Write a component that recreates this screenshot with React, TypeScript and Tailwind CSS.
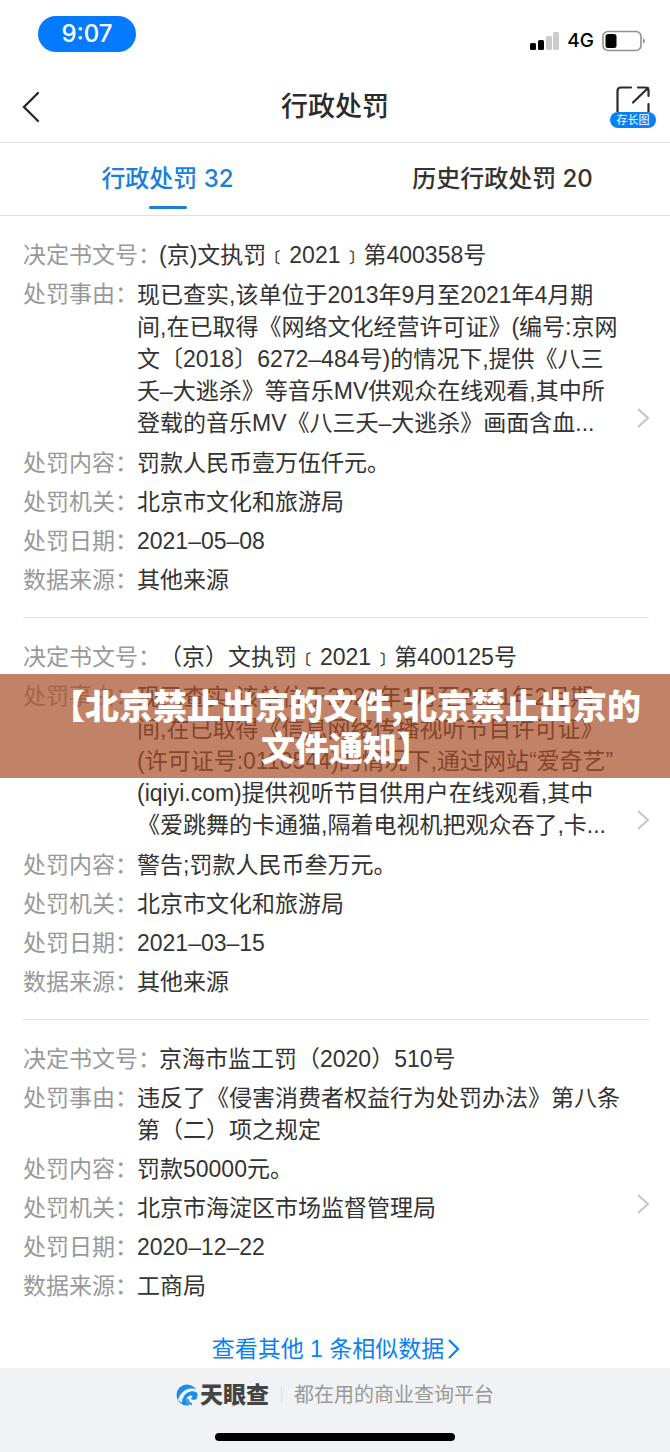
type Field = { label: string; value: string };

type PenaltyRecord = {
  no: string;
  reason: string;
  // 処罰事由が長く省略表示になる場合
  clamped: boolean;
  fields: Field[];
};

// モックデータ
const records: PenaltyRecord[] = [
  {
    no: '(京)文执罚﹝2021﹞第400358号',
    reason:
      '现已查实,该单位于2013年9月至2021年4月期\n间,在已取得《网络文化经营许可证》(编号:京网\n文〔2018〕6272–484号)的情况下,提供《八三\n夭–大逃杀》等音乐MV供观众在线观看,其中所\n登载的音乐MV《八三夭–大逃杀》画面含血...',
    clamped: true,
    fields: [
      { label: '处罚内容', value: '罚款人民币壹万伍仟元。' },
      { label: '处罚机关', value: '北京市文化和旅游局' },
      { label: '处罚日期', value: '2021–05–08' },
      { label: '数据来源', value: '其他来源' },
    ],
  },
  {
    no: '（京）文执罚﹝2021﹞第400125号',
    reason:
      '现已查实,该单位于2020年1月至2021年2月期\n间,在已取得《信息网络传播视听节目许可证》\n(许可证号:0110544)的情况下,通过网站“爱奇艺”\n(iqiyi.com)提供视听节目供用户在线观看,其中\n《爱跳舞的卡通猫,隔着电视机把观众吞了,卡...',
    clamped: true,
    fields: [
      { label: '处罚内容', value: '警告;罚款人民币叁万元。' },
      { label: '处罚机关', value: '北京市文化和旅游局' },
      { label: '处罚日期', value: '2021–03–15' },
      { label: '数据来源', value: '其他来源' },
    ],
  },
  {
    no: '京海市监工罚（2020）510号',
    reason: '违反了《侵害消费者权益行为处罚办法》第八条\n第（二）项之规定',
    clamped: false,
    fields: [
      { label: '处罚内容', value: '罚款50000元。' },
      { label: '处罚机关', value: '北京市海淀区市场监督管理局' },
      { label: '处罚日期', value: '2020–12–22' },
      { label: '数据来源', value: '工商局' },
    ],
  },
];

function StatusBar() {
  return (
    <div className="flex h-[72px] items-start justify-between pr-6 pl-[38px] pt-4">
      <span className="flex h-9 w-[98px] items-center justify-center rounded-full bg-[#047aff] font-['Inter',sans-serif] text-[24px] font-medium text-white">
        9:07
      </span>
      <div className="flex h-[50px] items-center gap-2">
        <svg className="h-5 w-[30px]" viewBox="0 0 30 20">
          <rect x="1" y="12" width="6" height="7" rx="1.5" fill="#000" />
          <rect x="9" y="9" width="6" height="10" rx="1.5" fill="#000" />
          <rect x="17" y="5" width="6" height="14" rx="1.5" fill="#ccc" />
          <rect x="24" y="1" width="6" height="18" rx="1.5" fill="#ccc" />
        </svg>
        <span className="font-['Inter',sans-serif] text-[19px] font-medium text-black">4G</span>
        <svg className="h-[22px] w-[44px]" viewBox="0 0 44 22">
          <rect x="1" y="1.5" width="38" height="19" rx="5" fill="none" stroke="#8f8f8f" strokeWidth="1.6" />
          <rect x="3.5" y="4" width="11" height="14" rx="2.5" fill="#000" />
          <path d="M41 8.500q2 .6 2 2.500t-2 2.500z" fill="#8f8f8f" />
        </svg>
      </div>
    </div>
  );
}

function Header() {
  return (
    <header className="grid h-[71px] grid-cols-[1fr_auto_1fr] items-center border-b border-[#e2e2e2] px-[14px]">
      <button type="button" aria-label="返回" className="justify-self-start pl-2">
        <svg className="h-8 w-[18px]" viewBox="0 0 18 32" fill="none" stroke="#2b2b2b" strokeWidth="2.4" strokeLinecap="round">
          <path d="M16 2 2 16l14 14" />
        </svg>
      </button>
      <h1 className="text-[27px] font-medium text-[#2b2b2b]">行政处罚</h1>
      <button type="button" className="flex w-[46px] flex-col items-center justify-self-end">
        <svg className="h-[26px] w-[34px]" viewBox="0 0 34 26" fill="none" stroke="#2b2b2b" strokeWidth="2.2" strokeLinecap="round">
          <path d="M1.500 26V5Q1.500 1.500 5 1.500H15" />
          <path d="M22 1.500H29.500Q32.500 1.500 32.500 4.500V10M32.500 18V26M17 16.500 32 2" />
        </svg>
        <span className="flex h-4 w-full items-center justify-center rounded-full bg-[#0a80f5] text-[11px] leading-4 font-normal text-white">
          存长图
        </span>
      </button>
    </header>
  );
}

function Tabs() {
  return (
    <nav className="grid h-[73px] grid-cols-2 border-b border-[#e2e2e2] font-['Inter','Noto_Sans_CJK_SC',sans-serif] text-[24px] font-medium">
      <button type="button" className="relative text-[#1a7fdc]">
        行政处罚 32
        <span className="absolute bottom-[6px] left-1/2 h-[3px] w-[38px] -translate-x-1/2 rounded-full bg-[#1a7fdc]" />
      </button>
      <button type="button" className="text-[#333]">
        历史行政处罚 20
      </button>
    </nav>
  );
}

function RecordCard({ record, more }: { record: PenaltyRecord; more?: boolean }) {
  return (
    <li className="mr-[21px] ml-[23px] flex items-center justify-between border-b border-[#e2e2e2] pt-[23px] pb-[21px] last:border-b-0">
      <div className="min-w-0 flex-1">
        <dl className="flex flex-col gap-[7px] whitespace-pre">
          <div className="flex">
            <dt className="w-[136px] shrink-0 text-[#999]">决定书文号：</dt>
            <dd>{record.no}</dd>
          </div>
          <div className="flex">
            <dt className="w-[114px] shrink-0 text-[#999]">处罚事由：</dt>
            <dd className={record.clamped ? 'py-px' : ''}>{record.reason}</dd>
          </div>
          {record.fields.map((field) => (
            <div key={field.label} className="flex">
              <dt className="w-[114px] shrink-0 text-[#999]">{field.label}：</dt>
              <dd>{field.value}</dd>
            </div>
          ))}
        </dl>
        {more && (
          <a href="#similar" className="mt-[31px] ml-3 flex items-center justify-center gap-1 text-[#0a80f5]">
            查看其他 1 条相似数据
            <svg className="h-5 w-3" viewBox="0 0 12 20" fill="none" stroke="currentColor" strokeWidth="2.2">
              <path d="m1 1 9 9-9 9" />
            </svg>
          </a>
        )}
      </div>
      <svg className="h-5 w-3 shrink-0" viewBox="0 0 12 20" fill="none" stroke="#c4c4c4" strokeWidth="2">
        <path d="m1 1 10 9-10 9" />
      </svg>
    </li>
  );
}

function Footer() {
  return (
    <footer className="relative -mt-[18px] flex flex-1 flex-col items-center justify-between bg-[#f1f2f4] pt-3 pb-[11px]">
      <div className="flex h-[30px] items-center">
        <svg className="h-[22px] w-[22px]" viewBox="0 0 22 22">
          <circle cx="11" cy="11" r="10.500" fill="#1a8cf0" />
          <path
            d="M2 16C4 9 9 5 15 4.500c2.500-.2 4.500.5 6 1.500l1 3C17 6 12 7.500 9 11c-2 2.500-3 5-3 8z"
            fill="#f1f2f4"
          />
          <path d="M7 20c0-6 3-10.500 8-11.500 2.500-.4 4 .5 4.500 2.500.4 2-.5 3.500-3 4.500" fill="none" stroke="#1a8cf0" strokeWidth="2" />
          <path d="M10.500 15c1-2.500 3-4 5-3.500 1.500.6 1 2.500-1 3 2 2 5 1.500 7.500-.5l-2 5-4.500 2.500c-3-.5-5-3-5-6.500z" fill="#f1f2f4" />
          <path d="M12 15c0 3 1.500 5 4 5" fill="none" stroke="#1a8cf0" strokeWidth="1.8" />
        </svg>
        <span className="ml-[2px] text-[23px] font-black text-[#444]">天眼查</span>
        <span className="mx-3 h-4 w-px bg-[#ddd]" />
        <span className="text-[20px] text-[#999]">都在用的商业查询平台</span>
      </div>
      <div className="h-2 w-60 rounded-full bg-black" />
    </footer>
  );
}

export default function App() {
  return (
    <div className="relative flex min-h-screen flex-col bg-white font-['Liberation_Sans','Noto_Sans_CJK_SC',sans-serif] text-[23px] leading-[32px] text-[#333]">
      <StatusBar />
      <Header />
      <Tabs />
      <ul>
        {records.map((record, i) => (
          <RecordCard key={record.no} record={record} more={i === records.length - 1} />
        ))}
      </ul>
      <Footer />

      {/* タイトル帯 */}
      <div className="absolute inset-x-0 top-[674px] flex h-[104px] items-center justify-center bg-[#a84d27]/70 pl-[22px]">
        <p className="text-center font-['Noto_Sans_CJK_SC',sans-serif] text-[34px] leading-[42px] font-black text-white">
          【北京禁止出京的文件,北京禁止出京的
          <br />
          文件通知】
        </p>
      </div>
    </div>
  );
}
